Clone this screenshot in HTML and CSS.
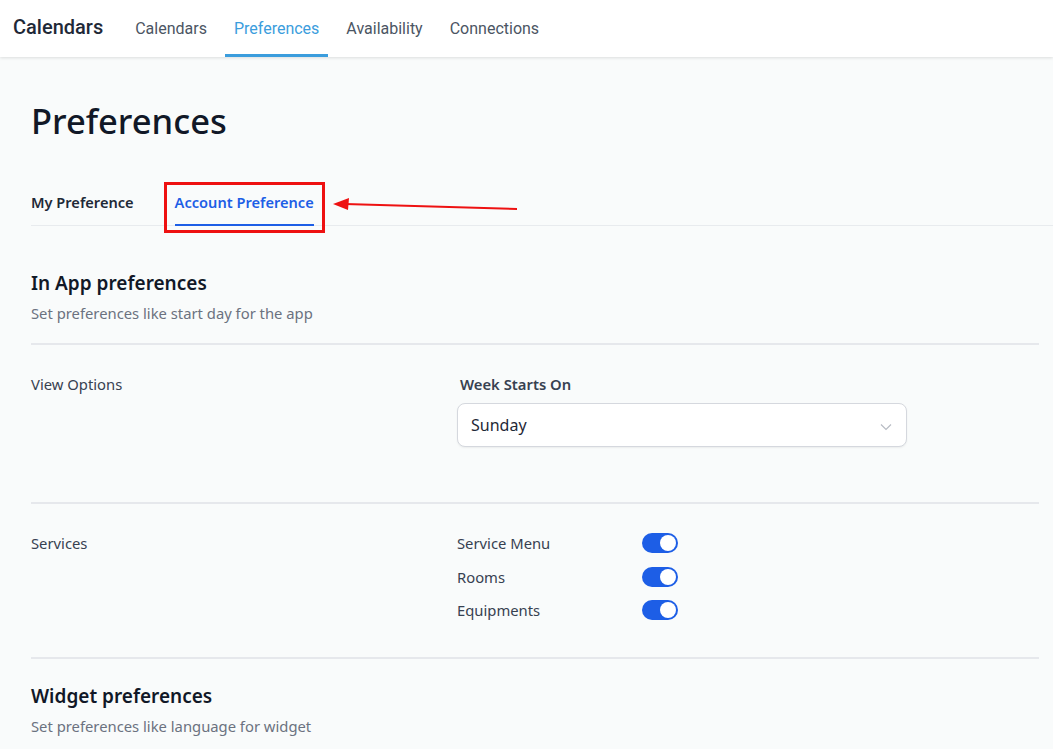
FILE: index.html
```html
<!DOCTYPE html>
<html lang="en">
<head>
	<meta charset="UTF-8">
	<meta name="viewport" content="width=device-width, initial-scale=1.0">
	<title>Preferences</title>
	<link rel="stylesheet" href="styles.css">
</head>
<body>
	<header class="topbar">
		<span class="brand">Calendars</span>
		<nav class="topnav">
			<a href="#">Calendars</a>
			<a href="#" class="active">Preferences</a>
			<a href="#">Availability</a>
			<a href="#">Connections</a>
		</nav>
	</header>

	<main class="page">
		<h1>Preferences</h1>

		<div class="tabs">
			<a href="#" class="tab">My Preference</a>
			<a href="#" class="tab active">Account Preference
				<span class="highlight"></span>
			</a>
			<svg class="arrow" width="200" height="20" viewBox="0 0 200 20">
				<line x1="186" y1="12" x2="14" y2="7" stroke="#ee1111" stroke-width="2"/>
				<polygon points="2,7 18,1 17,13" fill="#ee1111"/>
			</svg>
		</div>

		<section class="group">
			<h2>In App preferences</h2>
			<p class="hint">Set preferences like start day for the app</p>
		</section>

		<div class="row">
			<div class="row-label">View Options</div>
			<div class="row-body">
				<label class="field-label">Week Starts On</label>
				<div class="select">
					<span>Sunday</span>
					<svg width="12" height="8" viewBox="0 0 12 8"><path d="M1 1.5 6 6.5 11 1.5" fill="none" stroke="#b8bcc4" stroke-width="1.2"/></svg>
				</div>
			</div>
		</div>

		<div class="row services">
			<div class="row-label">Services</div>
			<div class="row-body toggles">
				<div class="toggle-row"><span>Service Menu</span><span class="toggle"></span></div>
				<div class="toggle-row"><span>Rooms</span><span class="toggle"></span></div>
				<div class="toggle-row"><span>Equipments</span><span class="toggle"></span></div>
			</div>
		</div>

		<section class="group last">
			<h2>Widget preferences</h2>
			<p class="hint">Set preferences like language for widget</p>
		</section>
	</main>
</body>
</html>
```

FILE: styles.css
```css
html {
	box-sizing: border-box;
}

*, *:before, *:after {
	box-sizing: inherit;
}

body {
	margin: 0;
	background: #f9fbfb;
	font-family: "Noto Sans", "Open Sans", sans-serif;
	color: #111827;
	height: 749px;
	overflow: hidden;
}

a {
	text-decoration: none;
	color: inherit;
}

.topbar {
	display: flex;
	align-items: stretch;
	height: 57px;
	background: #fff;
	padding-left: 13px;
	box-shadow: 0 1px 3px rgba(0, 0, 0, 0.12);
	font-family: Roboto, sans-serif;
	position: relative;
	z-index: 1;
}

.brand {
	display: flex;
	align-items: center;
	font-size: 20px;
	font-weight: 500;
	color: #1f2937;
	margin-right: 23px;
	padding-bottom: 4px;
}

.topnav {
	display: flex;
	gap: 9px;
}

.topnav a {
	display: flex;
	align-items: center;
	padding: 2px 9px 0;
	font-size: 16px;
	color: #4b5563;
	border-bottom: 3px solid transparent;
}

.topnav a.active {
	color: #3b9ddd;
	border-bottom-color: #3b9ddd;
}

.page {
	padding: 0 14px 0 31px;
}

h1 {
	margin: 44px 0 0;
	font-size: 34.5px;
	line-height: 40px;
	font-weight: 500;
	color: #111827;
}

.tabs {
	position: relative;
	display: flex;
	gap: 41px;
	margin: 51px -14px 0 0;
	border-bottom: 1px solid #e8ebee;
}

.tab {
	position: relative;
	font-size: 14.6px;
	font-weight: 600;
	line-height: 20px;
	padding-bottom: 12px;
	border-bottom: 2px solid transparent;
	margin-bottom: -1px;
	color: #1f2937;
}

.tab.active {
	color: #1d5ee6;
	border-bottom-color: #1d5ee6;
}

.highlight {
	position: absolute;
	left: -11px;
	right: -11px;
	top: -10px;
	bottom: -9px;
	border: 3px solid #ee1111;
}

.arrow {
	position: absolute;
	left: 300px;
	top: 5px;
}

.group h2 {
	margin: 44px 0 0;
	font-size: 19px;
	line-height: 26px;
	font-weight: 600;
	color: #111827;
}

.hint {
	margin: 7px 0 0;
	font-size: 14.8px;
	line-height: 20px;
	color: #6b7280;
}

.group {
	padding-bottom: 20px;
	border-bottom: 2px solid #e6e8ec;
}

.group.last {
	border-bottom: 0;
}

.group.last h2 {
	margin-top: 24px;
}

.row {
	display: grid;
	grid-template-columns: 426px 450px;
	padding: 29px 0 55px;
	border-bottom: 2px solid #e6e8ec;
	font-size: 14.8px;
	line-height: 20px;
}

.row-label {
	color: #374151;
}

.field-label {
	display: block;
	font-weight: 600;
	color: #374151;
	padding-left: 3px;
}

.select {
	display: flex;
	align-items: center;
	justify-content: space-between;
	height: 44px;
	margin-top: 9px;
	padding: 0 14px 0 13px;
	background: #fff;
	border: 1px solid #d5d8de;
	border-radius: 8px;
	box-shadow: 0 1px 2px rgba(0, 0, 0, 0.06);
	font-size: 16px;
	color: #1f2937;
}

.select svg {
	margin-top: 4px;
}

.services {
	padding-bottom: 37px;
}

.toggles {
	display: flex;
	flex-direction: column;
	gap: 13.5px;
}

.toggle-row {
	display: grid;
	grid-template-columns: 185px 36px;
	align-items: center;
	color: #374151;
}

.toggle {
	position: relative;
	display: block;
	width: 36px;
	height: 20px;
	border-radius: 10px;
	background: #1d5ee6;
}

.toggle:after {
	content: "";
	position: absolute;
	right: 2px;
	top: 2px;
	width: 16px;
	height: 16px;
	border-radius: 50%;
	background: #fff;
}
```
